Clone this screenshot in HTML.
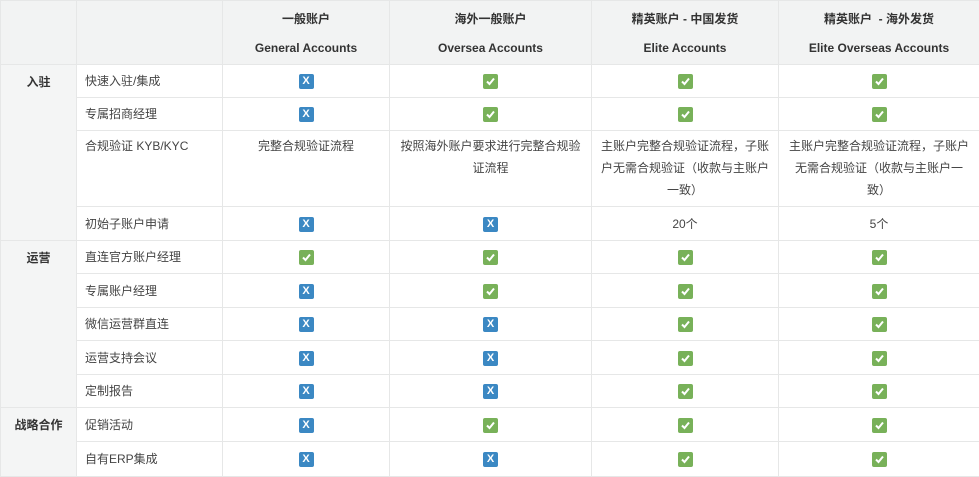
<!DOCTYPE html>
<html><head><meta charset="utf-8"><style>
*{margin:0;padding:0;box-sizing:border-box}
body{width:979px;height:476px;overflow:hidden;background:#fff;font-family:"Liberation Sans","Noto Sans CJK SC",sans-serif;font-size:12px;color:#444}
table{border-collapse:collapse;table-layout:fixed;width:979px}
td,th{border:1px solid #e6e7e7;text-align:center;vertical-align:middle;line-height:22px;padding:0 8px}
th{background:#f2f3f3;font-weight:bold;color:#333;font-size:12px;line-height:29px;padding-top:2px}
td.g{background:#f4f5f5;font-weight:bold;color:#333;vertical-align:top;padding-top:6px}
td.l{text-align:left;padding-left:8px}
td.t{vertical-align:top;padding-top:4px}
.x,.c{display:inline-block;width:15px;height:15px;border-radius:2px;vertical-align:middle;position:relative;font-style:normal}
.x{background:#3b88c3}
.x:after{content:"X";position:absolute;left:0;right:0;top:0;color:#fff;font-weight:bold;font-size:11px;line-height:15px;text-align:center;font-style:normal}
.c{background:#78b159}
.c svg{position:absolute;left:2px;top:2px}
tr{height:33px}
</style></head><body>
<table>
<colgroup><col style="width:76px"><col style="width:146px"><col style="width:167px"><col style="width:202px"><col style="width:187px"><col style="width:201px"></colgroup>
<tr style="height:64px"><th></th><th></th><th>一般账户<br>General Accounts</th><th>海外一般账户<br>Oversea Accounts</th><th>精英账户 - 中国发货<br>Elite Accounts</th><th>精英账户&nbsp; - 海外发货<br>Elite Overseas Accounts</th></tr>
<tr><td class="g" rowspan="4">入驻</td><td class="l">快速入驻/集成</td><td><span class="x"></span></td><td><span class="c"><svg width="11" height="11" viewBox="0 0 11 11"><path d="M2 5.5l2.5 2.5 4.5-5.5" stroke="#fff" stroke-width="2" fill="none"/></svg></span></td><td><span class="c"><svg width="11" height="11" viewBox="0 0 11 11"><path d="M2 5.5l2.5 2.5 4.5-5.5" stroke="#fff" stroke-width="2" fill="none"/></svg></span></td><td><span class="c"><svg width="11" height="11" viewBox="0 0 11 11"><path d="M2 5.5l2.5 2.5 4.5-5.5" stroke="#fff" stroke-width="2" fill="none"/></svg></span></td></tr>
<tr><td class="l">专属招商经理</td><td><span class="x"></span></td><td><span class="c"><svg width="11" height="11" viewBox="0 0 11 11"><path d="M2 5.5l2.5 2.5 4.5-5.5" stroke="#fff" stroke-width="2" fill="none"/></svg></span></td><td><span class="c"><svg width="11" height="11" viewBox="0 0 11 11"><path d="M2 5.5l2.5 2.5 4.5-5.5" stroke="#fff" stroke-width="2" fill="none"/></svg></span></td><td><span class="c"><svg width="11" height="11" viewBox="0 0 11 11"><path d="M2 5.5l2.5 2.5 4.5-5.5" stroke="#fff" stroke-width="2" fill="none"/></svg></span></td></tr>
<tr style="height:76px"><td class="l t">合规验证 KYB/KYC</td><td class="t">完整合规验证流程</td><td class="t">按照海外账户要求进行完整合规验证流程</td><td class="t">主账户完整合规验证流程，子账户无需合规验证（收款与主账户一致）</td><td class="t">主账户完整合规验证流程，子账户无需合规验证（收款与主账户一致）</td></tr>
<tr style="height:34px"><td class="l">初始子账户申请</td><td><span class="x"></span></td><td><span class="x"></span></td><td>20个</td><td>5个</td></tr>
<tr><td class="g" rowspan="5">运营</td><td class="l">直连官方账户经理</td><td><span class="c"><svg width="11" height="11" viewBox="0 0 11 11"><path d="M2 5.5l2.5 2.5 4.5-5.5" stroke="#fff" stroke-width="2" fill="none"/></svg></span></td><td><span class="c"><svg width="11" height="11" viewBox="0 0 11 11"><path d="M2 5.5l2.5 2.5 4.5-5.5" stroke="#fff" stroke-width="2" fill="none"/></svg></span></td><td><span class="c"><svg width="11" height="11" viewBox="0 0 11 11"><path d="M2 5.5l2.5 2.5 4.5-5.5" stroke="#fff" stroke-width="2" fill="none"/></svg></span></td><td><span class="c"><svg width="11" height="11" viewBox="0 0 11 11"><path d="M2 5.5l2.5 2.5 4.5-5.5" stroke="#fff" stroke-width="2" fill="none"/></svg></span></td></tr>
<tr style="height:34px"><td class="l">专属账户经理</td><td><span class="x"></span></td><td><span class="c"><svg width="11" height="11" viewBox="0 0 11 11"><path d="M2 5.5l2.5 2.5 4.5-5.5" stroke="#fff" stroke-width="2" fill="none"/></svg></span></td><td><span class="c"><svg width="11" height="11" viewBox="0 0 11 11"><path d="M2 5.5l2.5 2.5 4.5-5.5" stroke="#fff" stroke-width="2" fill="none"/></svg></span></td><td><span class="c"><svg width="11" height="11" viewBox="0 0 11 11"><path d="M2 5.5l2.5 2.5 4.5-5.5" stroke="#fff" stroke-width="2" fill="none"/></svg></span></td></tr>
<tr><td class="l">微信运营群直连</td><td><span class="x"></span></td><td><span class="x"></span></td><td><span class="c"><svg width="11" height="11" viewBox="0 0 11 11"><path d="M2 5.5l2.5 2.5 4.5-5.5" stroke="#fff" stroke-width="2" fill="none"/></svg></span></td><td><span class="c"><svg width="11" height="11" viewBox="0 0 11 11"><path d="M2 5.5l2.5 2.5 4.5-5.5" stroke="#fff" stroke-width="2" fill="none"/></svg></span></td></tr>
<tr style="height:34px"><td class="l">运营支持会议</td><td><span class="x"></span></td><td><span class="x"></span></td><td><span class="c"><svg width="11" height="11" viewBox="0 0 11 11"><path d="M2 5.5l2.5 2.5 4.5-5.5" stroke="#fff" stroke-width="2" fill="none"/></svg></span></td><td><span class="c"><svg width="11" height="11" viewBox="0 0 11 11"><path d="M2 5.5l2.5 2.5 4.5-5.5" stroke="#fff" stroke-width="2" fill="none"/></svg></span></td></tr>
<tr><td class="l">定制报告</td><td><span class="x"></span></td><td><span class="x"></span></td><td><span class="c"><svg width="11" height="11" viewBox="0 0 11 11"><path d="M2 5.5l2.5 2.5 4.5-5.5" stroke="#fff" stroke-width="2" fill="none"/></svg></span></td><td><span class="c"><svg width="11" height="11" viewBox="0 0 11 11"><path d="M2 5.5l2.5 2.5 4.5-5.5" stroke="#fff" stroke-width="2" fill="none"/></svg></span></td></tr>
<tr style="height:34px"><td class="g" rowspan="2">战略合作</td><td class="l">促销活动</td><td><span class="x"></span></td><td><span class="c"><svg width="11" height="11" viewBox="0 0 11 11"><path d="M2 5.5l2.5 2.5 4.5-5.5" stroke="#fff" stroke-width="2" fill="none"/></svg></span></td><td><span class="c"><svg width="11" height="11" viewBox="0 0 11 11"><path d="M2 5.5l2.5 2.5 4.5-5.5" stroke="#fff" stroke-width="2" fill="none"/></svg></span></td><td><span class="c"><svg width="11" height="11" viewBox="0 0 11 11"><path d="M2 5.5l2.5 2.5 4.5-5.5" stroke="#fff" stroke-width="2" fill="none"/></svg></span></td></tr>
<tr style="height:35px"><td class="l">自有ERP集成</td><td><span class="x"></span></td><td><span class="x"></span></td><td><span class="c"><svg width="11" height="11" viewBox="0 0 11 11"><path d="M2 5.5l2.5 2.5 4.5-5.5" stroke="#fff" stroke-width="2" fill="none"/></svg></span></td><td><span class="c"><svg width="11" height="11" viewBox="0 0 11 11"><path d="M2 5.5l2.5 2.5 4.5-5.5" stroke="#fff" stroke-width="2" fill="none"/></svg></span></td></tr>
</table>
</body></html>
